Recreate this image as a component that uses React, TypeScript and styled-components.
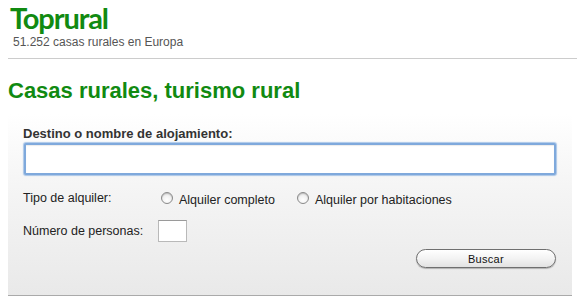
import React from "react";
import styled, { createGlobalStyle } from "styled-components";

const Global = createGlobalStyle`
  html, body { margin: 0; padding: 0; background: #fff; }
  body { margin: 8px; font-family: "Liberation Sans", Arial, sans-serif; font-size: 12px; color: #333; }
`;

const Page = styled.div`
  width: 569px;
`;

const Header = styled.header`
  padding-left: 2px;
  padding-bottom: 9px;
  border-bottom: 1px solid #cccccc;
`;

const Logo = styled.h1`
  margin: -10px 0 0 0;
  font-family: Lato, "Open Sans", sans-serif;
  font-weight: 700;
  font-size: 29px;
  line-height: 40px;
  letter-spacing: -1.1px;
  color: #118a11;
`;

const Tagline = styled.div`
  margin-top: -3px;
  padding-left: 3px;
  font-size: 12px;
  line-height: 14px;
  color: #555;
`;

const Heading = styled.h2`
  margin: 20px 0 11px 0;
  font-size: 22px;
  line-height: 24px;
  font-weight: 700;
  color: #118a11;
`;

const Panel = styled.form`
  width: 564px;
  box-sizing: border-box;
  padding: 12px 16px 27px 15px;
  background: linear-gradient(#ffffff 0%, #f6f6f6 35%, #e9e9e9 100%);
  border-bottom: 1px solid #aaaaaa;
`;

const FieldLabel = styled.label`
  display: block;
  font-weight: 700;
  font-size: 13px;
  line-height: 15px;
  color: #333;
  margin-bottom: 2px;
`;

const TextInput = styled.input`
  display: block;
  box-sizing: border-box;
  width: 532px;
  height: 32px;
  margin: 0 0 0 1px;
  border: 2px solid #7fa9dc;
  border-radius: 2px;
  box-shadow: 0 0 1px 1px rgba(120, 165, 220, 0.6), inset 0 1px 1px rgba(0,0,0,0.08);
  background: #fff;
  outline: none;
`;

const Row = styled.div<{ $top: number }>`
  display: grid;
  grid-template-columns: 135px 1fr;
  align-items: center;
  min-height: 16px;
  margin-top: ${(p) => p.$top}px;
  font-size: 12.5px;
  color: #222;
`;

const Options = styled.div`
  display: flex;
  align-items: center;
  gap: 22px;
  padding-left: 3px;
`;

const Option = styled.label`
  display: flex;
  align-items: center;
  gap: 6px;
  position: relative;
  top: 2px;
`;

const Radio = styled.span`
  width: 10px;
  height: 10px;
  border-radius: 50%;
  border: 1px solid #8a8a8a;
  background: radial-gradient(circle at 50% 70%, #ffffff 0%, #f2f2f2 50%, #cfcfcf 100%);
  box-shadow: inset 0 1px 1px rgba(0,0,0,0.15);
  margin-top: -4px;
`;

const SmallInput = styled.input`
  box-sizing: border-box;
  width: 29px;
  height: 22px;
  margin: 0;
  border: 1px solid #b9b9b9;
  border-top-color: #9a9a9a;
  background: #fff;
`;

const Actions = styled.div`
  display: flex;
  justify-content: flex-end;
  margin-top: 7px;
`;

const Button = styled.button`
  width: 140px;
  height: 19px;
  border-radius: 10px;
  border: 1px solid #6f6f6f;
  background: linear-gradient(#ffffff 0%, #f3f3f3 50%, #e2e2e2 100%);
  box-shadow: 0 1px 1px rgba(0,0,0,0.25);
  font-family: "Liberation Sans", Arial, sans-serif;
  font-size: 11px;
  color: #111;
  letter-spacing: 0.3px;
  padding: 0;
`;

export default function App() {
  return (
    <Page>
      <Global />
      <Header>
        <Logo>Toprural</Logo>
        <Tagline>51.252 casas rurales en Europa</Tagline>
      </Header>
      <Heading>Casas rurales, turismo rural</Heading>
      <Panel onSubmit={(e) => e.preventDefault()}>
        <FieldLabel>Destino o nombre de alojamiento:</FieldLabel>
        <TextInput type="text" />
        <Row $top={15}>
          <span>Tipo de alquiler:</span>
          <Options>
            <Option>
              <Radio />
              Alquiler completo
            </Option>
            <Option>
              <Radio />
              Alquiler por habitaciones
            </Option>
          </Options>
        </Row>
        <Row $top={14}>
          <span>Número de personas:</span>
          <SmallInput type="text" />
        </Row>
        <Actions>
          <Button type="submit">Buscar</Button>
        </Actions>
      </Panel>
    </Page>
  );
}
